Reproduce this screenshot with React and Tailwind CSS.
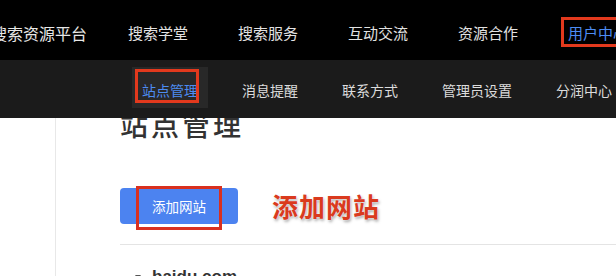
import React from 'react'

const topNav = ['搜索学堂', '搜索服务', '互动交流', '资源合作']
const subNav = ['消息提醒', '联系方式', '管理员设置', '分润中心']

function App() {
  return (
    <div className="w-[616px] h-[276px] overflow-hidden bg-white font-['Noto_Sans_CJK_SC','Noto_Sans',sans-serif]">
      {/* top bar */}
      <header className="h-[60px] bg-black flex items-center pt-[6px] whitespace-nowrap">
        <div className="ml-[-9px] text-[16px] leading-[20px] text-[#e8e8e8]">搜索资源平台</div>
        <div className="ml-[41px] flex gap-[50px] text-[15px] leading-[20px] text-[#e2e2e2]">
          {topNav.map((item) => (
            <span key={item}>{item}</span>
          ))}
          <span className="relative text-[#4d8cf2]">
            用户中心
            <span className="absolute -left-[7px] -right-[7px] -top-[6px] -bottom-[4px] border-[3px] border-[#e2391d]"></span>
          </span>
        </div>
      </header>

      {/* sub bar */}
      <nav className="h-[58px] bg-[#1b1b1b] flex items-center pl-[142px] pt-[1px] gap-[44px] text-[14px] leading-[20px] text-[#dcdcdc] whitespace-nowrap">
        <span className="relative text-[#4d8cf2]">
          <span className="absolute -left-[10px] -right-[10px] -top-[13px] -bottom-[8px] bg-[#282828]"></span>
          <span className="relative">站点管理</span>
          <span className="absolute -left-[7px] -right-[1px] -top-[11px] -bottom-[3px] border-[3px] border-[#e2391d]"></span>
        </span>
        {subNav.map((item) => (
          <span key={item}>{item}</span>
        ))}
      </nav>

      {/* content */}
      <div className="flex h-[158px]">
        <div className="w-[56px] border-r border-[#e8e8e8]"></div>
        <main className="flex-1 pl-[64px]">
          <div className="h-[22px] overflow-hidden">
            <h1 className="-mt-[8px] text-[28px] leading-[28px] tracking-[3px] font-medium text-[#333]">站点管理</h1>
          </div>

          <div className="mt-[48px] flex items-center">
            <button className="relative w-[118px] h-[36px] rounded-[4px] bg-[#4c83f0] text-white text-[13.5px]">
              添加网站
              <span className="absolute left-[16px] w-[86px] -top-[2px] -bottom-[6px] border-[3px] border-[#d9301f]"></span>
            </button>
            <span className="ml-[34px] text-[26px] leading-[30px] tracking-[1px] font-bold text-[#da3a1e] [text-shadow:0_0_2px_#fff,1px_2px_3px_rgba(0,0,0,0.35)]">
              添加网站
            </span>
          </div>

          <div className="mt-[20px] border-t border-[#e4e4e4]"></div>

          <div className="flex items-center pt-[22px] text-[#333]">
            <span className="ml-[15px] w-0 h-0 border-l-[3.5px] border-r-[3.5px] border-t-[4px] border-l-transparent border-r-transparent border-t-[#555]"></span>
            <span className="ml-[11px] text-[17px] leading-[20px] font-semibold font-['Liberation_Sans',sans-serif]">baidu.com</span>
          </div>
        </main>
      </div>
    </div>
  )
}

export default App
